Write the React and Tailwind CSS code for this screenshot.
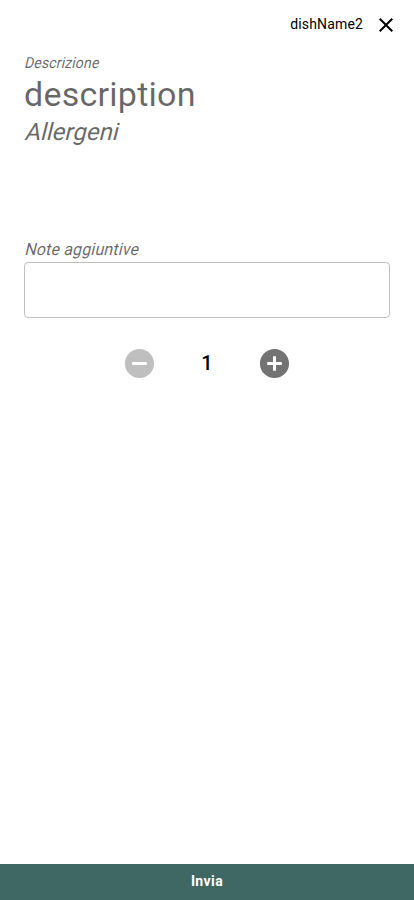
import React from "react";

export default function App() {
  return (
    <div className="flex h-[900px] w-full flex-col bg-white font-['Roboto',sans-serif] text-black">
      <header className="flex h-12 items-center justify-end pr-4">
        <span className="text-sm leading-5 tracking-[0.15px]">dishName2</span>
        <button className="ml-[11px] flex h-6 w-6 items-center justify-center" aria-label="Chiudi">
          <svg viewBox="0 0 24 24" className="mt-0.5 h-6 w-6" fill="currentColor">
            <path d="M19 6.41L17.59 5 12 10.59 6.41 5 5 6.41 10.59 12 5 17.59 6.41 19 12 13.41 17.59 19 19 17.59 13.41 12z" />
          </svg>
        </button>
      </header>
      <main className="flex flex-1 flex-col items-start px-6 pt-[5px] text-black/60">
        <p className="origin-[0_75%] scale-y-[1.09] -skew-x-[14deg] text-sm leading-5 tracking-[0.15px]">Descrizione</p>
        <p className="text-[34px] leading-[42px] tracking-[0.25px]">description</p>
        <p className="mt-px origin-[0_75%] -skew-x-[14deg] text-2xl leading-8">Allergeni</p>
        <label className="mt-[90px] origin-[0_75%] scale-y-[1.06] -skew-x-[14deg] text-base leading-6 tracking-[0.15px]">Note aggiuntive</label>
        <input className="h-14 w-full rounded border border-black/25 px-3.5 outline-none" />
        <div className="mt-7 flex w-full items-center justify-center">
          <svg viewBox="0 0 24 24" className="h-[35px] w-[35px] text-black/25" fill="currentColor">
            <path d="M12 2C6.48 2 2 6.48 2 12s4.48 10 10 10 10-4.48 10-10S17.52 2 12 2zm5 11H7v-2h10v2z" />
          </svg>
          <span className="w-[100px] pb-0.5 text-center text-xl font-medium text-black">1</span>
          <svg viewBox="0 0 24 24" className="h-[35px] w-[35px] text-black/55" fill="currentColor">
            <path d="M12 2C6.48 2 2 6.48 2 12s4.48 10 10 10 10-4.48 10-10S17.52 2 12 2zm5 11h-4v4h-2v-4H7v-2h4V7h2v4h4v2z" />
          </svg>
        </div>
      </main>
      <button className="h-9 w-full bg-[#3f6764] pb-0.5 text-sm font-bold tracking-[0.4px] text-white">Invia</button>
    </div>
  );
}
